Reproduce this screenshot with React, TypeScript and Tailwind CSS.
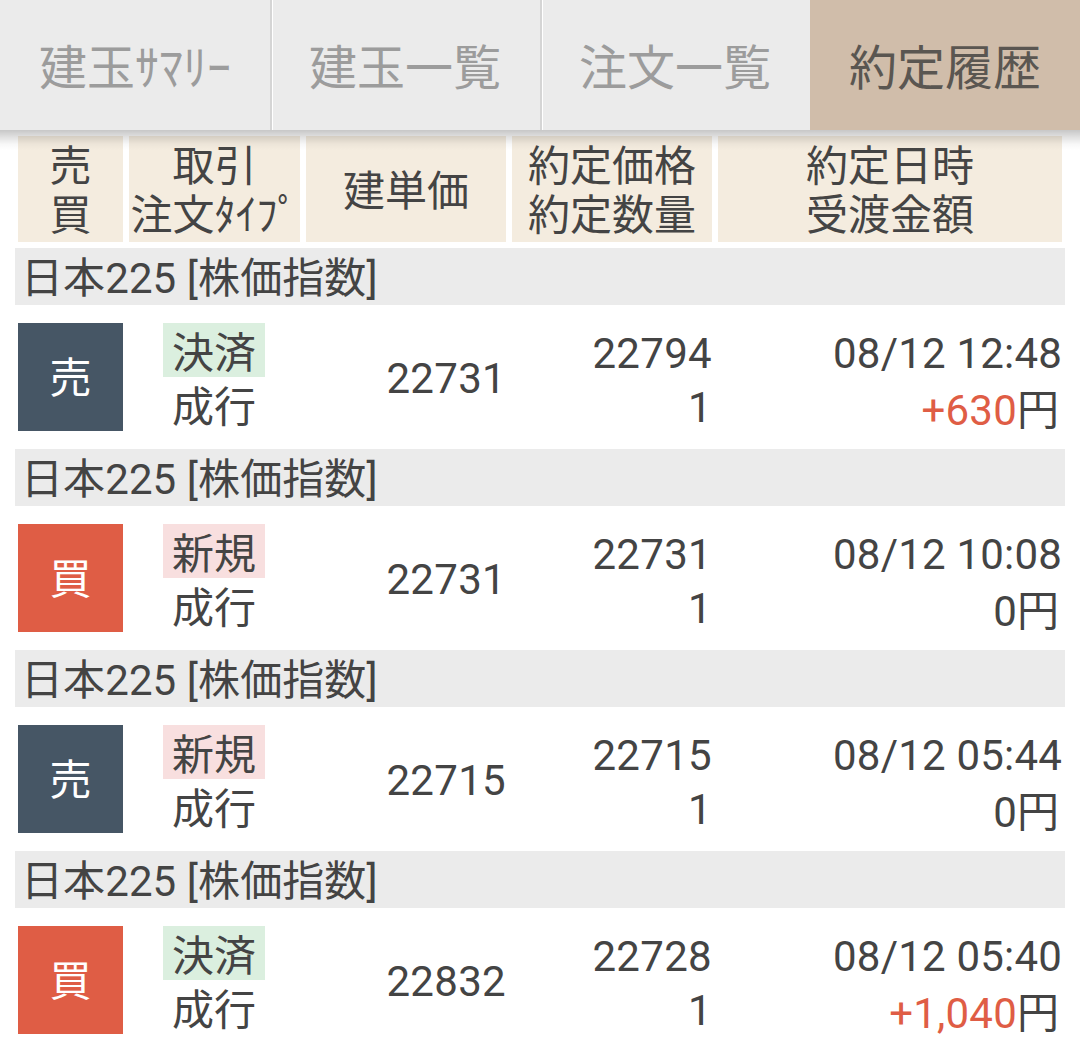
import React from 'react';

type Side = '売' | '買';
type Kind = '決済' | '新規';

interface Execution {
  side: Side;
  kind: Kind;
  openPrice: string;
  execPrice: string;
  quantity: string;
  time: string;
  amount: string;
}

const tabs = ['建玉ｻﾏﾘｰ', '建玉一覧', '注文一覧', '約定履歴'];

const headers = [
  { lines: ['売', '買'], width: 'w-[105px]' },
  { lines: ['取引', '注文ﾀｲﾌﾟ'], width: 'w-[171px]' },
  { lines: ['建単価'], width: 'w-[200px]' },
  { lines: ['約定価格', '約定数量'], width: 'w-[200px]' },
  { lines: ['約定日時', '受渡金額'], width: 'w-[344px]' }
];

const executions: Execution[] = [
  { side: '売', kind: '決済', openPrice: '22731', execPrice: '22794', quantity: '1', time: '08/12 12:48', amount: '+630' },
  { side: '買', kind: '新規', openPrice: '22731', execPrice: '22731', quantity: '1', time: '08/12 10:08', amount: '0' },
  { side: '売', kind: '新規', openPrice: '22715', execPrice: '22715', quantity: '1', time: '08/12 05:44', amount: '0' },
  { side: '買', kind: '決済', openPrice: '22832', execPrice: '22728', quantity: '1', time: '08/12 05:40', amount: '+1,040' }
];

const TabBar = () => (
  <nav className="relative z-10 flex h-[130px] bg-[#ebebeb]">
    {tabs.map((tab, index) => (
      <button
        key={tab}
        className={`h-full w-[270px] pt-[7px] text-center text-[48px] whitespace-nowrap ${
          index === 3 ? 'bg-[#d0bdaa] text-[#5a5651]' : 'text-[#9c9c9c]'
        } ${index === 1 || index === 2 ? 'shadow-[inset_2px_0_0_#d5d5d5,inset_3px_0_0_#ffffff]' : ''}`}
      >
        {tab}
      </button>
    ))}
    {/* drop shadow over the table header */}
    <div className="pointer-events-none absolute inset-x-0 top-full h-[20px] bg-[linear-gradient(to_bottom,rgba(0,0,0,0.22),rgba(0,0,0,0.12)_35%,rgba(0,0,0,0.03)_70%,transparent)]" />
  </nav>
);

const ExecutionRow = ({ item }: { item: Execution }) => (
  <section className="h-[201px]">
    <h2 className="mx-[15px] h-[57px] bg-[#ebebeb] pl-[6px] leading-[62px] tracking-[0.1px]">日本225 [株価指数]</h2>
    <div className="flex h-[144px] gap-[6px] px-[18px] pt-[18px]">
      <div
        className={`flex h-[108px] w-[105px] items-center justify-center pt-[3px] text-white ${
          item.side === '売' ? 'bg-[#465665]' : 'bg-[#df5d45]'
        }`}
      >
        {item.side}
      </div>
      <div className="flex w-[171px] flex-col items-center pr-[1px]">
        <span className={`h-[54px] w-[102px] text-center leading-[62px] ${item.kind === '決済' ? 'bg-[#dbefdf]' : 'bg-[#f8dfdf]'}`}>
          {item.kind}
        </span>
        <span className="leading-[62px]">成行</span>
      </div>
      <div className="w-[200px] text-right leading-[112px] tracking-[0.3px]">{item.openPrice}</div>
      <div className="w-[200px] text-right tracking-[0.3px]">
        <p className="h-[54px] leading-[62px]">{item.execPrice}</p>
        <p className="leading-[62px]">{item.quantity}</p>
      </div>
      <div className="w-[344px] text-right">
        <p className="h-[54px] leading-[62px] tracking-[0.2px]">{item.time}</p>
        <p className="pr-[3px] leading-[68px]">
          <span className={item.amount.startsWith('+') ? 'tracking-[0.2px] text-[#df5d45]' : 'tracking-[0.2px]'}>{item.amount}</span>円
        </p>
      </div>
    </div>
  </section>
);

export default function App() {
  return (
    <div className="h-[1049px] w-[1080px] overflow-hidden bg-white font-[Roboto,'Noto_Sans_CJK_JP',sans-serif] text-[42px] text-[#444444]">
      <TabBar />
      <div className="flex gap-[6px] px-[18px] pt-[6px] pb-[6px]">
        {headers.map((header) => (
          <div
            key={header.lines[0]}
            className={`flex h-[106px] flex-col items-center justify-center bg-[#f4ecdf] pt-[4px] leading-[49px] whitespace-nowrap ${header.width}`}
          >
            {header.lines.map((line) => (
              <span key={line}>{line}</span>
            ))}
          </div>
        ))}
      </div>
      {executions.map((item) => (
        <ExecutionRow key={item.time} item={item} />
      ))}
    </div>
  );
}
